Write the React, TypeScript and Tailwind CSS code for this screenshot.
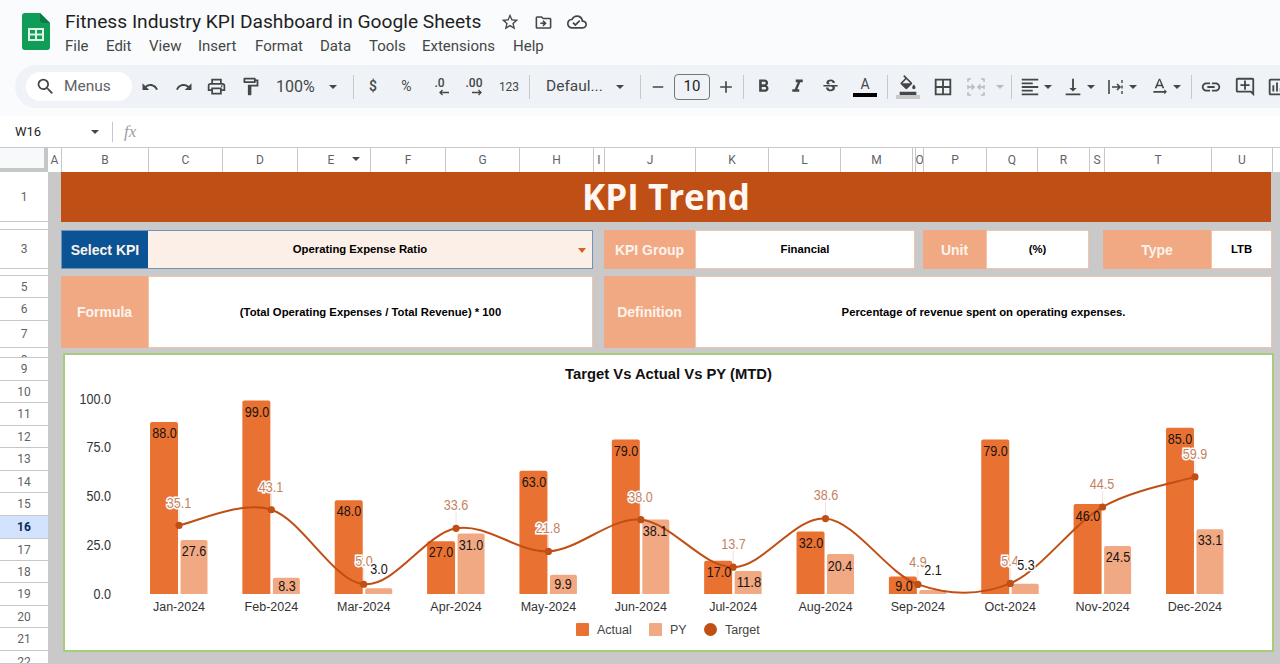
import type { ReactNode } from 'react';
import {
  MdSearch, MdUndo, MdRedo, MdOutlinePrint, MdOutlineFormatPaint, MdRemove, MdAdd,
  MdFormatBold, MdFormatItalic, MdStrikethroughS, MdOutlineFormatColorFill, MdBorderAll,
  MdFormatAlignLeft, MdVerticalAlignBottom, MdTextRotationNone, MdLink, MdOutlineAddComment,
  MdOutlineInsertChart, MdStarBorder, MdOutlineDriveFileMove, MdOutlineCloudDone,
} from 'react-icons/md';

const MENUS = [
  { label: 'File', w: 'w-[41px]' },
  { label: 'Edit', w: 'w-[43px]' },
  { label: 'View', w: 'w-[49px]' },
  { label: 'Insert', w: 'w-[57px]' },
  { label: 'Format', w: 'w-[65px]' },
  { label: 'Data', w: 'w-[49px]' },
  { label: 'Tools', w: 'w-[53px]' },
  { label: 'Extensions', w: 'w-[91px]' },
  { label: 'Help', w: 'w-[40px]' },
];

const COLUMNS = [
  { label: 'A', w: 'w-[14px]' },
  { label: 'B', w: 'w-[87px]' },
  { label: 'C', w: 'w-[74px]' },
  { label: 'D', w: 'w-[75px]' },
  { label: 'E', w: 'w-[73px]' },
  { label: 'F', w: 'w-[75px]' },
  { label: 'G', w: 'w-[74px]' },
  { label: 'H', w: 'w-[74px]' },
  { label: 'I', w: 'w-[11px]' },
  { label: 'J', w: 'w-[91px]' },
  { label: 'K', w: 'w-[73px]' },
  { label: 'L', w: 'w-[72px]' },
  { label: 'M', w: 'w-[72px]' },
  { label: '', w: 'w-[3px]' },
  { label: 'O', w: 'w-[8px]' },
  { label: 'P', w: 'w-[63px]' },
  { label: 'Q', w: 'w-[51px]' },
  { label: 'R', w: 'w-[52px]' },
  { label: 'S', w: 'w-[15px]' },
  { label: 'T', w: 'w-[107px]' },
  { label: 'U', w: 'w-[61px]' },
];

const ROWS = [
  { n: 1, h: 'h-[50px]', pos: 'items-center' },
  { n: 2, h: 'h-[8px]', pos: 'items-start pt-[6px]' },
  { n: 3, h: 'h-[39px]', pos: 'items-center' },
  { n: 4, h: 'h-[7px]', pos: 'items-start pt-[5px]' },
  { n: 5, h: 'h-[22px]', pos: 'items-center' },
  { n: 6, h: 'h-[23px]', pos: 'items-center' },
  { n: 7, h: 'h-[27px]', pos: 'items-center' },
  { n: 8, h: 'h-[10px]', pos: 'items-start pt-[5px]' },
  { n: 9, h: 'h-[23px]', pos: 'items-center' },
  { n: 10, h: 'h-[22px]', pos: 'items-center' },
  { n: 11, h: 'h-[23px]', pos: 'items-center' },
  { n: 12, h: 'h-[22px]', pos: 'items-center' },
  { n: 13, h: 'h-[23px]', pos: 'items-center' },
  { n: 14, h: 'h-[22px]', pos: 'items-center' },
  { n: 15, h: 'h-[23px]', pos: 'items-center' },
  { n: 16, h: 'h-[23px]', pos: 'items-center' },
  { n: 17, h: 'h-[22px]', pos: 'items-center' },
  { n: 18, h: 'h-[22px]', pos: 'items-center' },
  { n: 19, h: 'h-[23px]', pos: 'items-center' },
  { n: 20, h: 'h-[22px]', pos: 'items-center' },
  { n: 21, h: 'h-[23px]', pos: 'items-center' },
  { n: 22, h: 'h-[13px]', pos: 'items-start pt-[4px]' },
];

// label positions were read off the reference, the chart moves them around collisions
const CHART = [
  { m: 'Jan-2024', actual: 88, py: 27.6, target: 35.1, a: [164.5, 433], p: [194, 551], t: [179, 503] },
  { m: 'Feb-2024', actual: 99, py: 8.3, target: 43.1, a: [257, 412], p: [287, 586], t: [271, 487] },
  { m: 'Mar-2024', actual: 48, py: 3, target: 5, a: [349, 511], p: [379, 569], t: [364, 561], halo: true },
  { m: 'Apr-2024', actual: 27, py: 31, target: 33.6, a: [441, 552], p: [471, 545], t: [456, 505] },
  { m: 'May-2024', actual: 63, py: 9.9, target: 21.8, a: [534, 482], p: [563, 584], t: [548, 528] },
  { m: 'Jun-2024', actual: 79, py: 38.1, target: 38, a: [626, 451], p: [655, 531], t: [640.5, 497] },
  { m: 'Jul-2024', actual: 17, py: 11.8, target: 13.7, a: [719, 572], p: [749, 582], t: [733.5, 544] },
  { m: 'Aug-2024', actual: 32, py: 20.4, target: 38.6, a: [811, 543], p: [840, 566], t: [826, 495] },
  { m: 'Sep-2024', actual: 9, py: 2.1, target: 4.9, a: [904, 586], p: [933, 570], t: [918, 562], halo: true },
  { m: 'Oct-2024', actual: 79, py: 5.3, target: 5.4, a: [995.5, 451], p: [1026, 565], t: [1010, 561], halo: true },
  { m: 'Nov-2024', actual: 46, py: 24.5, target: 44.5, a: [1088, 516], p: [1118, 557], t: [1102, 484] },
  { m: 'Dec-2024', actual: 85, py: 33.1, target: 59.9, a: [1180, 439], p: [1210, 540], t: [1195, 454] },
];

const BASE_Y = 594;
const toY = (v: number) => BASE_Y - v * 1.955;
const toX = (i: number) => 179 + i * 92.36;

// the reference is squeezed sideways, numbers are taller than their width
const numWidth = (s: string) => (s.length - 1) * 7 + 3.5;

function targetPath() {
  const pts = CHART.map((d, i) => [toX(i), toY(d.target)]);
  let path = `M${pts[0][0]} ${pts[0][1]}`;
  for (let i = 0; i < pts.length - 1; i++) {
    const p0 = pts[Math.max(i - 1, 0)];
    const p1 = pts[i];
    const p2 = pts[i + 1];
    const p3 = pts[Math.min(i + 2, pts.length - 1)];
    const c1x = p1[0] + (p2[0] - p0[0]) / 6;
    const c1y = p1[1] + (p2[1] - p0[1]) / 6;
    const c2x = p2[0] - (p3[0] - p1[0]) / 6;
    const c2y = p2[1] - (p3[1] - p1[1]) / 6;
    path += ` C${c1x} ${c1y} ${c2x} ${c2y} ${p2[0]} ${p2[1]}`;
  }
  return path;
}

function barPath(x: number, w: number, v: number) {
  const top = toY(v);
  const r = Math.min(2, BASE_Y - top);
  return `M${x} ${BASE_Y}V${top + r}Q${x} ${top} ${x + r} ${top}H${x + w - r}Q${x + w} ${top} ${x + w} ${top + r}V${BASE_Y}Z`;
}

function Caret({ light }: { light?: boolean }) {
  return (
    <svg width="8" height="4" viewBox="0 0 8 4" className={light ? 'fill-[#b8bcc2]' : 'fill-[#444746]'}>
      <path d="M0 0h8L4 4z" />
    </svg>
  );
}

function Slot({ w, children }: { w: string; children: ReactNode }) {
  return <div className={`${w} h-full shrink-0 flex items-center justify-center`}>{children}</div>;
}

function Sep({ ml }: { ml: string }) {
  return <div className={`${ml} w-px h-[24px] shrink-0 bg-[#c7c7c7]`} />;
}

function WithCaret({ ml, children }: { ml: string; children: ReactNode }) {
  return (
    <div className={`${ml} w-[36px] h-full shrink-0 flex items-center`}>
      <div className="w-[24px] flex items-center justify-center">{children}</div>
      <div className="w-[12px] flex items-center justify-center">
        <Caret />
      </div>
    </div>
  );
}

function SheetsLogo() {
  return (
    <svg width="28" height="37" viewBox="0 0 28 37">
      <path d="M3 0h15l10 10v24a3 3 0 0 1-3 3H3a3 3 0 0 1-3-3V3a3 3 0 0 1 3-3z" fill="#0f9d58" />
      <path d="M18 0l10 10h-7a3 3 0 0 1-3-3z" fill="#0b7a45" />
      <path d="M7 16h14v11H7z" fill="none" stroke="#dff3e7" strokeWidth="2" />
      <path d="M7 21.5h14M14 16v11" stroke="#dff3e7" strokeWidth="2" />
    </svg>
  );
}

function DecimalIcon({ text, flip }: { text: string; flip?: boolean }) {
  return (
    <div className="flex flex-col items-center text-[12px] font-medium leading-[11px] text-[#444746]">
      <span>{text}</span>
      <svg width="12" height="7" viewBox="0 0 12 7" className={flip ? 'ml-[6px]' : 'ml-[8px]'}>
        <path
          d={flip ? 'M1 3.5h9M7.5 1l2.5 2.5L7.5 6' : 'M11 3.5H2M4.5 1L2 3.5 4.5 6'}
          fill="none"
          stroke="#444746"
          strokeWidth="1.3"
        />
      </svg>
    </div>
  );
}

function MergeIcon() {
  return (
    <svg width="20" height="20" viewBox="0 0 20 20" fill="none" stroke="#b8bcc2" strokeWidth="1.5">
      <path d="M5 2H2v3M15 2h3v3M5 18H2v-3M15 18h3v-3" />
      <path d="M2 8v4M18 8v4M2 10h6M5.5 7.5L8 10l-2.5 2.5M18 10h-6M14.5 7.5L12 10l2.5 2.5" />
    </svg>
  );
}

function WrapIcon() {
  return (
    <svg width="20" height="20" viewBox="0 0 20 20" fill="none" stroke="#444746" strokeWidth="1.6">
      <path d="M4 3v14" />
      <path d="M7 10h8M12 7l3 3-3 3" />
      <path d="M17 3v3M17 8.5v3M17 14v3" strokeWidth="1.4" />
    </svg>
  );
}

function Toolbar() {
  const icon = 'text-[#444746]';
  return (
    <div className="h-[43px] ml-[15px] pl-[11px] rounded-l-full bg-[#eff3f8] flex items-center overflow-hidden">
      <div className="w-[106px] h-[29px] shrink-0 rounded-full bg-white flex items-center pl-[9px] gap-[8px] text-[15.5px] text-[#5f6368]">
        <MdSearch size={21} className="text-[#444746]" />
        <span>Menus</span>
      </div>
      <div className="ml-[1px] w-[34px] h-full shrink-0 flex items-center justify-center">
        <MdUndo size={18} className={icon} />
      </div>
      <Slot w="w-[33px]"><MdRedo size={18} className={icon} /></Slot>
      <Slot w="w-[33px]"><MdOutlinePrint size={21} className={icon} /></Slot>
      <Slot w="w-[34px]"><MdOutlineFormatPaint size={21} className={icon} /></Slot>
      <div className="w-[79px] h-full shrink-0 flex items-center pl-[9px] text-[16px] text-[#444746]">
        <span>100%</span>
        <div className="ml-[14px]"><Caret /></div>
      </div>
      <Sep ml="ml-[7px]" />
      <Slot w="w-[38px]"><span className="text-[14px] font-medium text-[#444746]">$</span></Slot>
      <Slot w="w-[29px]"><span className="text-[14px] text-[#444746]">%</span></Slot>
      <Slot w="w-[37px]"><DecimalIcon text=".0" /></Slot>
      <Slot w="w-[32px]"><DecimalIcon text=".00" flip /></Slot>
      <Slot w="w-[38px]"><span className="text-[12px] text-[#444746]">123</span></Slot>
      <Sep ml="ml-[1px]" />
      <div className="w-[102px] h-full shrink-0 flex items-center pl-[16px] text-[15.5px] text-[#444746]">
        <span className="w-[70px]">Defaul...</span>
        <Caret />
      </div>
      <Sep ml="ml-[8px]" />
      <Slot w="w-[33px]"><MdRemove size={18} className={icon} /></Slot>
      <div className="w-[36px] h-[26px] shrink-0 rounded-[4px] border border-[#747775] flex items-center justify-center text-[15px] text-[#1f1f1f]">
        10
      </div>
      <Slot w="w-[31px]"><MdAdd size={20} className={icon} /></Slot>
      <Sep ml="ml-[2px]" />
      <Slot w="w-[38px]"><MdFormatBold size={21} className={icon} /></Slot>
      <Slot w="w-[30px]"><MdFormatItalic size={21} className={icon} /></Slot>
      <Slot w="w-[36px]"><MdStrikethroughS size={19} className={icon} /></Slot>
      <Slot w="w-[34px]">
        <div className="flex flex-col items-center">
          <span className="text-[14px] leading-[16px] text-[#444746]">A</span>
          <div className="w-[24px] h-[4px] mt-[1px] bg-black" />
        </div>
      </Slot>
      <Sep ml="ml-[5px]" />
      <Slot w="w-[40px]">
        <div className="flex flex-col items-center">
          <MdOutlineFormatColorFill size={20} className={icon} />
          <div className="w-[24px] h-[4px] bg-[#c9c9c9]" />
        </div>
      </Slot>
      <Slot w="w-[30px]"><MdBorderAll size={22} className={icon} /></Slot>
      <Slot w="w-[35px]"><MergeIcon /></Slot>
      <Slot w="w-[14px]"><Caret light /></Slot>
      <Sep ml="ml-[4px]" />
      <WithCaret ml="ml-[6px]"><MdFormatAlignLeft size={22} className={icon} /></WithCaret>
      <WithCaret ml="ml-[7px]"><MdVerticalAlignBottom size={22} className={icon} /></WithCaret>
      <WithCaret ml="ml-[6px]"><WrapIcon /></WithCaret>
      <WithCaret ml="ml-[8px]"><MdTextRotationNone size={21} className={icon} /></WithCaret>
      <Sep ml="ml-[8px]" />
      <Slot w="w-[38px]"><MdLink size={22} className={icon} /></Slot>
      <Slot w="w-[30px]"><MdOutlineAddComment size={22} className={icon} /></Slot>
      <Slot w="w-[34px]"><MdOutlineInsertChart size={22} className={icon} /></Slot>
    </div>
  );
}

function Label({ w, text, bg = 'bg-[#f1a983]' }: { w: string; text: string; bg?: string }) {
  return (
    <div className={`${w} h-full ${bg} pt-[1px] flex items-center justify-center text-[14px] font-bold text-[#fdf3ec]`}>
      {text}
    </div>
  );
}

function Value({ w, text }: { w: string; text: string }) {
  return (
    <div className={`${w} h-full bg-white border border-[#f1c4ad] flex items-center justify-center text-[11.3px] font-bold text-black`}>
      {text}
    </div>
  );
}

function TrendChart() {
  return (
    <svg width="1207" height="295" viewBox="65 355 1207 295" className="block font-['Liberation_Sans',Arial,sans-serif]">
      <text x="668.5" y="379" textAnchor="middle" fontSize="14.8" fontWeight="700" fill="#111">
        Target Vs Actual Vs PY (MTD)
      </text>
      {[100, 75, 50, 25, 0].map((v) => (
        <text
          key={v}
          x="111"
          y={toY(v) + 5}
          textAnchor="end"
          fontSize="14"
          fill="#333"
          textLength={numWidth(v.toFixed(1))}
          lengthAdjust="spacingAndGlyphs"
        >
          {v.toFixed(1)}
        </text>
      ))}
      {CHART.map((d, i) => (
        <g key={d.m}>
          <path d={barPath(toX(i) - 29, 28, d.actual)} fill="#e97132" />
          <path d={barPath(toX(i) + 1.5, 27, d.py)} fill="#f1a983" />
          <text x={toX(i)} y="611" textAnchor="middle" fontSize="12.5" fill="#333">
            {d.m}
          </text>
          <line x1={toX(i)} y1={d.t[1] + 7} x2={toX(i)} y2={toY(d.target)} stroke="#eee3dc" />
        </g>
      ))}
      <path d={targetPath()} fill="none" stroke="#c04f15" strokeWidth="2" />
      {CHART.map((d, i) => (
        <circle key={d.m} cx={toX(i)} cy={toY(d.target)} r="3.6" fill="#c04f15" />
      ))}
      {CHART.map((d) => (
        <text
          key={d.m}
          x={d.t[0]}
          y={d.t[1] + 5}
          textAnchor="middle"
          fontSize="14"
          fill="#c4835f"
          stroke="#fff"
          strokeWidth="3"
          paintOrder="stroke"
          textLength={numWidth(d.target.toFixed(1))}
          lengthAdjust="spacingAndGlyphs"
        >
          {d.target.toFixed(1)}
        </text>
      ))}
      {CHART.map((d) => (
        <g key={d.m} fontSize="14" fill="#1a1310" textAnchor="middle">
          <text
            x={d.a[0]}
            y={d.a[1] + 5}
            textLength={numWidth(d.actual.toFixed(1))}
            lengthAdjust="spacingAndGlyphs"
          >
            {d.actual.toFixed(1)}
          </text>
          <text
            x={d.p[0]}
            y={d.p[1] + 5}
            stroke={d.halo ? '#fff' : 'none'}
            strokeWidth={d.halo ? 3 : 0}
            paintOrder="stroke"
            textLength={numWidth(d.py.toFixed(1))}
            lengthAdjust="spacingAndGlyphs"
          >
            {d.py.toFixed(1)}
          </text>
        </g>
      ))}
      <rect x="576" y="623" width="13" height="13" rx="1" fill="#e97132" />
      <text x="597" y="634" fontSize="12.5" fill="#444">Actual</text>
      <rect x="649" y="623" width="13" height="13" rx="1" fill="#f1a983" />
      <text x="670" y="634" fontSize="12.5" fill="#444">PY</text>
      <circle cx="710.5" cy="629.5" r="6.5" fill="#c04f15" />
      <text x="725" y="634" fontSize="12.5" fill="#444">Target</text>
    </svg>
  );
}

export default function App() {
  return (
    <div className="w-[1280px] h-[664px] overflow-hidden bg-white font-['Roboto',sans-serif]">
      <header className="h-[116px] bg-[#f9fbfd]">
        <div className="h-[65px] flex">
          <div className="w-[65px] pl-[22px] pt-[13px] shrink-0">
            <SheetsLogo />
          </div>
          <div>
            <div className="h-[34px] pt-[10px] flex items-center">
              <h1 className="w-[428px] text-[19.2px] leading-[26px] text-[#1f1f1f]">
                Fitness Industry KPI Dashboard in Google Sheets
              </h1>
              <div className="w-[34px] flex justify-center">
                <MdStarBorder size={20} className="text-[#444746]" />
              </div>
              <div className="w-[33px] flex justify-center">
                <MdOutlineDriveFileMove size={19} className="text-[#444746]" />
              </div>
              <div className="w-[33px] flex justify-center">
                <MdOutlineCloudDone size={20} className="text-[#444746]" />
              </div>
            </div>
            <nav className="h-[22px] mt-[1px] flex items-center text-[15px] text-[#444746]">
              {MENUS.map((m) => (
                <span key={m.label} className={m.w}>{m.label}</span>
              ))}
            </nav>
          </div>
        </div>
        <Toolbar />
      </header>

      <div className="h-[31px] bg-white flex items-center">
        <div className="w-[112px] flex items-center pl-[15px] text-[13px] text-[#1f1f1f]">
          <span className="w-[76px]">W16</span>
          <Caret />
        </div>
        <div className="w-px h-[20px] bg-[#c7c7c7]" />
        <span className="ml-[11px] font-['Liberation_Serif',serif] italic text-[17px] text-[#9aa0a6]">fx</span>
      </div>

      <div className="h-[25px] flex border-t border-[#c7c7c7] bg-white">
        <div className="w-[48px] h-full shrink-0 bg-[#f8f9fa] border-r-[4px] border-b-[4px] border-[#c4c7c5]" />
        {COLUMNS.map((c) => (
          <div
            key={c.w + c.label}
            className={`${c.w} h-full shrink-0 border-r border-[#c7c7c7] flex items-center justify-center text-[12px] text-[#5f6368] overflow-hidden`}
          >
            {c.label === 'E' ? (
              <div className="relative w-full text-center pr-[2px]">
                <span className="mr-[4px]">E</span>
                <div className="absolute right-[10px] top-[6px]"><Caret /></div>
              </div>
            ) : (
              c.label
            )}
          </div>
        ))}
      </div>

      <div className="h-[492px] flex overflow-hidden">
        <div className="w-[48px] shrink-0 bg-white">
          {ROWS.map((r) => (
            <div
              key={r.n}
              className={`${r.h} ${r.pos} flex justify-center overflow-hidden border-b border-[#c7c7c7] text-[12px] leading-[14px] ${
                r.n === 16 ? 'bg-[#d3e3fd] font-bold text-[#0b2a5c]' : 'text-[#5f6368]'
              }`}
            >
              {r.n}
            </div>
          ))}
        </div>

        <main className="flex-1 bg-[#c9c9c9] pl-[13px] font-['Liberation_Sans',Arial,sans-serif]">
          <div className="w-[1210px] h-[50px] bg-[#bf4f14] flex items-center justify-center font-['Open_Sans',sans-serif] text-[35px] font-bold text-[#fff7f1]">
            KPI Trend
          </div>

          <div className="h-[39px] mt-[8px] flex">
            <div className="w-[532px] h-full flex border border-[#6f94bb]">
              <Label w="w-[86px]" text="Select KPI" bg="bg-[#0b5394]" />
              <div className="relative flex-1 bg-[#fcefe8] pr-[20px] flex items-center justify-center text-[11.3px] font-bold text-black">
                Operating Expense Ratio
                <div className="absolute right-[6px] top-[17px] w-0 h-0 border-x-[4px] border-x-transparent border-t-[5px] border-t-[#d9601e]" />
              </div>
            </div>
            <div className="ml-[11px] flex h-full">
              <Label w="w-[91px]" text="KPI Group" />
              <Value w="w-[220px]" text="Financial" />
            </div>
            <div className="ml-[8px] flex h-full">
              <Label w="w-[63px]" text="Unit" />
              <Value w="w-[103px]" text="(%)" />
            </div>
            <div className="ml-[14px] flex h-full">
              <Label w="w-[108px]" text="Type" />
              <Value w="w-[61px]" text="LTB" />
            </div>
          </div>

          <div className="h-[72px] mt-[7px] flex">
            <div className="flex h-full">
              <Label w="w-[87px]" text="Formula" />
              <Value w="w-[445px]" text="(Total Operating Expenses / Total Revenue) * 100" />
            </div>
            <div className="ml-[11px] flex h-full">
              <Label w="w-[91px]" text="Definition" />
              <Value w="w-[577px]" text="Percentage of revenue spent on operating expenses." />
            </div>
          </div>

          <div className="w-[1211px] h-[299px] mt-[5px] ml-[2px] bg-white border-2 border-[#a9cc7c]">
            <TrendChart />
          </div>
        </main>
      </div>
    </div>
  );
}
